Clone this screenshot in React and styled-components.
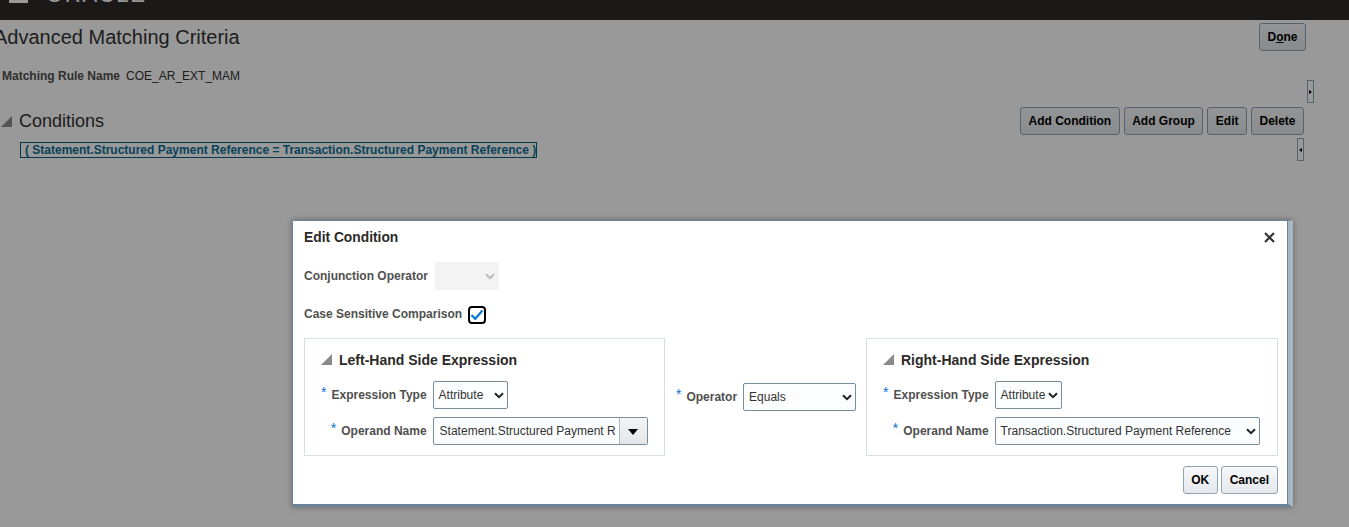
import React from "react";
import styled, { createGlobalStyle } from "styled-components";

const Global = createGlobalStyle`
  html, body { margin: 0; padding: 0; background: #fff; }
  body { font-family: "Liberation Sans", Arial, sans-serif; color: #2c2a28; width: 1349px; height: 527px; overflow: hidden; }
`;
const Page = styled.div`
  position: relative;
  width: 1349px;
  height: 527px;
  overflow: hidden;
  background: #fff;
`;
const Veil = styled.div`
  position: absolute;
  inset: 0;
  background: rgba(0, 0, 0, 0.4);
`;
const TopBar = styled.header`
  height: 20px;
  background: #2d2b28;
  overflow: hidden;
  display: flex;
  align-items: flex-end;
  padding-left: 9px;
  gap: 18px;
  box-sizing: border-box;
`;
const Burger = styled.div`
  width: 19px;
  height: 3px;
  background: #fff;
  margin-bottom: 17px;
`;
const Logo = styled.div`
  font-size: 22px;
  line-height: 22px;
  letter-spacing: 1.7px;
  color: #fff;
  margin-bottom: 14px;
`;
const Main = styled.main`
  display: flex;
  flex-direction: column;
`;
const TitleRow = styled.div`
  display: flex;
  justify-content: space-between;
  align-items: flex-start;
  padding: 3px 43px 0 0;
`;
const Title = styled.h1`
  margin: 0 0 0 -6px;
  font-size: 20px;
  line-height: 28px;
  font-weight: 400;
  color: #333;
`;
const Btn = styled.button`
  font: bold 12px/16px "Liberation Sans", Arial, sans-serif;
  color: #000;
  height: 28px;
  padding: 0 ${(p) => p.$px || 7.5}px;
  border: 1px solid #8fa3b5;
  border-radius: 3px;
  background: linear-gradient(#f6f8fa, #e4e8ec);
  white-space: nowrap;
  cursor: pointer;
`;
const InfoRow = styled.div`
  display: flex;
  justify-content: space-between;
  align-items: flex-start;
  padding: 0 35px 0 2px;
  margin-bottom: 4px;
`;
const RuleRow = styled.div`
  display: flex;
  gap: 6px;
  margin-top: 17px;
  font-size: 12px;
  line-height: 16px;
`;
const RuleLabel = styled.span`
  font-weight: 700;
  color: #50504f;
`;
const RuleValue = styled.span`
  color: #333;
`;
const Splitter = styled.div`
  width: 7px;
  height: 23px;
  box-sizing: border-box;
  margin-top: ${(p) => p.$mt || 0}px;
  border: 1px solid #8fa3b5;
  display: flex;
  align-items: center;
  justify-content: center;
  background: #fff;
  flex: none;
`;
const Arrow = styled.i`
  width: 0;
  height: 0;
  border-top: 2.5px solid transparent;
  border-bottom: 2.5px solid transparent;
  ${(p) => (p.$left ? "border-right: 3px solid #000;" : "border-left: 3px solid #000;")}
`;
const ConditionsHead = styled.div`
  display: flex;
  align-items: center;
  justify-content: space-between;
  padding: 0 45px 0 1px;
  height: 28px;
`;
const SectionTitle = styled.div`
  display: flex;
  align-items: center;
  gap: 7px;
  font-size: 18px;
  line-height: 24px;
  color: #333;
`;
const Disclosure = styled.svg`
  width: 11px;
  height: 11px;
  flex: none;
  display: block;
`;
const Buttons = styled.div`
  display: flex;
  gap: ${(p) => p.$gap || 4}px;
`;
const TreeRow = styled.div`
  display: flex;
  justify-content: space-between;
  padding: 3px 45px 0 20px;
  align-items: flex-start;
`;
const TreeNode = styled.div`
  border: 1px solid #0b5f7d;
  background: #fff;
  color: #0e6e96;
  font-size: 12px;
  font-weight: 700;
  line-height: 14px;
  height: 14px;
  margin-top: 4px;
  padding: 0 0 0 4px;
  white-space: pre;
`;
const Dialog = styled.section`
  position: absolute;
  left: 292px;
  top: 220px;
  width: 1001px;
  height: 287px;
  box-sizing: border-box;
  background: #fff;
  border: 1px solid #6b8299;
  border-right: 5px solid #a9b6c2;
  border-bottom: 3px solid #6f8397;
  box-shadow: 0 0 6px rgba(0, 0, 0, 0.35), inset -1px 0 0 #6b8299;
  padding: 0 10px 0 11px;
  display: flex;
  flex-direction: column;
`;
const DialogHead = styled.div`
  display: flex;
  justify-content: space-between;
  align-items: center;
  height: 32px;
  padding-right: 3px;
`;
const DialogTitle = styled.h2`
  margin: 0;
  font-size: 13.8px;
  font-weight: 700;
  color: #2c2a28;
`;
const Close = styled.svg`
  width: 11px;
  height: 11px;
  display: block;
`;
const FieldRow = styled.div`
  display: flex;
  align-items: center;
  height: ${(p) => p.$h || 28}px;
  margin-top: ${(p) => p.$mt || 0}px;
  gap: ${(p) => p.$gap || 7}px;
`;
const Label = styled.label`
  font-size: 12px;
  font-weight: 700;
  color: #50504f;
  white-space: nowrap;
`;
const DisabledSelect = styled.div`
  width: 64px;
  height: 28px;
  background: #f3f3f3;
  border-radius: 2px;
  display: flex;
  align-items: center;
  justify-content: flex-end;
  padding-right: 4px;
  box-sizing: border-box;
`;
const Check = styled.div`
  width: 18px;
  height: 18px;
  box-sizing: border-box;
  margin-top: 2px;
  border: 2px solid #000;
  border-radius: 4px;
  display: flex;
  align-items: center;
  justify-content: center;
  background: #fff;
  flex: none;
`;
const Columns = styled.div`
  display: grid;
  grid-template-columns: 361px 1fr 412px;
  margin-top: 11px;
  height: 118px;
  align-items: stretch;
`;
const Panel = styled.div`
  border: 1px solid #d6dfe6;
  padding: 0 16px;
  display: flex;
  flex-direction: column;
  box-sizing: border-box;
`;
const PanelHead = styled.div`
  display: flex;
  align-items: center;
  gap: 7px;
  height: 21px;
  margin-top: 10px;
  font-size: 14px;
  font-weight: 700;
  color: #2c2a28;
`;
const FormGrid = styled.div`
  display: grid;
  grid-template-columns: auto 1fr;
  column-gap: 6px;
  row-gap: 8px;
  margin-top: 11px;
  align-items: center;
  justify-items: start;
`;
const ReqLabel = styled(Label)`
  justify-self: end;
  display: flex;
  gap: 5px;
  align-items: baseline;
`;
const Star = styled.span`
  color: #0572ce;
  font-size: 14px;
  line-height: 10px;
  font-weight: 400;
  position: relative;
  top: -2px;
`;
const FakeSelect = styled.div`
  width: ${(p) => p.$w}px;
  height: 28px;
  box-sizing: border-box;
  border: 1px solid #7a8d9b;
  border-radius: 2px;
  background: #fbfdfe;
  display: flex;
  align-items: center;
  justify-content: space-between;
  padding: 0 3px 0 5px;
  font-size: 12px;
  color: #333;
  white-space: nowrap;
  overflow: hidden;
`;
const Combo = styled.div`
  width: 215px;
  height: 28px;
  box-sizing: border-box;
  border: 1px solid #7a8d9b;
  border-radius: 2px;
  background: #fbfdfe;
  display: flex;
  align-items: stretch;
  font-size: 12px;
  color: #333;
`;
const ComboText = styled.div`
  flex: 1;
  padding-left: 6px;
  display: flex;
  align-items: center;
  white-space: nowrap;
  overflow: hidden;
`;
const ComboBtn = styled.div`
  width: 27px;
  border-left: 1px solid #a9b8c3;
  background: linear-gradient(#f2f4f6, #e2e6ea);
  display: flex;
  align-items: center;
  justify-content: center;
`;
const Tri = styled.i`
  width: 0;
  height: 0;
  border-left: 5px solid transparent;
  border-right: 5px solid transparent;
  border-top: 6px solid #000;
  margin-top: 2px;
`;
const OperatorCol = styled.div`
  display: flex;
  align-items: center;
  justify-content: center;
  gap: 6px;
  padding-left: 1px;
`;
const Footer = styled.div`
  display: flex;
  justify-content: flex-end;
  margin-top: 10px;
`;

const Tri45 = () => (
  <Disclosure viewBox="0 0 11 11">
    <path d="M11 0V11H0Z" fill="#8a8a8a" />
  </Disclosure>
);
const Chev = ({ color = "#222" }) => (
  <svg width="10" height="7" viewBox="0 0 10 7" style={{ flex: "none" }}>
    <path d="M1 1.2 5 5.2 9 1.2" fill="none" stroke={color} strokeWidth="2" />
  </svg>
);

const Side = ({ title, typeW, operand }) => (
  <Panel>
    <PanelHead>
      <Tri45 />
      {title}
    </PanelHead>
    <FormGrid>
      <ReqLabel><Star>*</Star>Expression Type</ReqLabel>
      <FakeSelect $w={typeW}>Attribute<Chev /></FakeSelect>
      <ReqLabel><Star>*</Star>Operand Name</ReqLabel>
      {operand}
    </FormGrid>
  </Panel>
);

export default function App() {
  return (
    <Page>
      <Global />
      <TopBar>
        <Burger />
        <Logo>ORACLE</Logo>
      </TopBar>
      <Main>
        <TitleRow>
          <Title>Advanced Matching Criteria</Title>
          <Btn>D<u>o</u>ne</Btn>
        </TitleRow>
        <InfoRow>
          <RuleRow>
            <RuleLabel>Matching Rule Name</RuleLabel>
            <RuleValue>COE_AR_EXT_MAM</RuleValue>
          </RuleRow>
          <Splitter $mt={29}><Arrow /></Splitter>
        </InfoRow>
        <ConditionsHead>
          <SectionTitle><Tri45 />Conditions</SectionTitle>
          <Buttons>
            <Btn>Add Condition</Btn>
            <Btn>Add Group</Btn>
            <Btn>Edit</Btn>
            <Btn>Delete</Btn>
          </Buttons>
        </ConditionsHead>
        <TreeRow>
          <TreeNode>{"( Statement.Structured Payment Reference = Transaction.Structured Payment Reference )"}</TreeNode>
          <Splitter><Arrow $left /></Splitter>
        </TreeRow>
      </Main>
      <Veil />
      <Dialog>
        <DialogHead>
          <DialogTitle>Edit Condition</DialogTitle>
          <Close viewBox="0 0 11 11">
            <path d="M1 1 10 10M10 1 1 10" stroke="#333" strokeWidth="2.2" />
          </Close>
        </DialogHead>
        <FieldRow $mt={9}>
          <Label>Conjunction Operator</Label>
          <DisabledSelect><Chev color="#bbb" /></DisabledSelect>
        </FieldRow>
        <FieldRow $mt={11} $h={26} $gap={6}>
          <Label>Case Sensitive Comparison</Label>
          <Check>
            <svg width="14" height="12" viewBox="0 0 14 12">
              <path d="M1.5 6 5.2 9.8 12.5 1.5" fill="none" stroke="#0a7ad6" strokeWidth="2.2" />
            </svg>
          </Check>
        </FieldRow>
        <Columns>
          <Side
            title="Left-Hand Side Expression"
            typeW={75}
            operand={
              <Combo>
                <ComboText>Statement.Structured Payment R</ComboText>
                <ComboBtn><Tri /></ComboBtn>
              </Combo>
            }
          />
          <OperatorCol>
            <ReqLabel><Star>*</Star>Operator</ReqLabel>
            <FakeSelect $w={113}>Equals<Chev /></FakeSelect>
          </OperatorCol>
          <Side
            title="Right-Hand Side Expression"
            typeW={67}
            operand={
              <FakeSelect $w={265}>Transaction.Structured Payment Reference<Chev /></FakeSelect>
            }
          />
        </Columns>
        <Footer>
          <Buttons $gap={3}>
            <Btn>OK</Btn>
            <Btn $px={8}>Cancel</Btn>
          </Buttons>
        </Footer>
      </Dialog>
    </Page>
  );
}
